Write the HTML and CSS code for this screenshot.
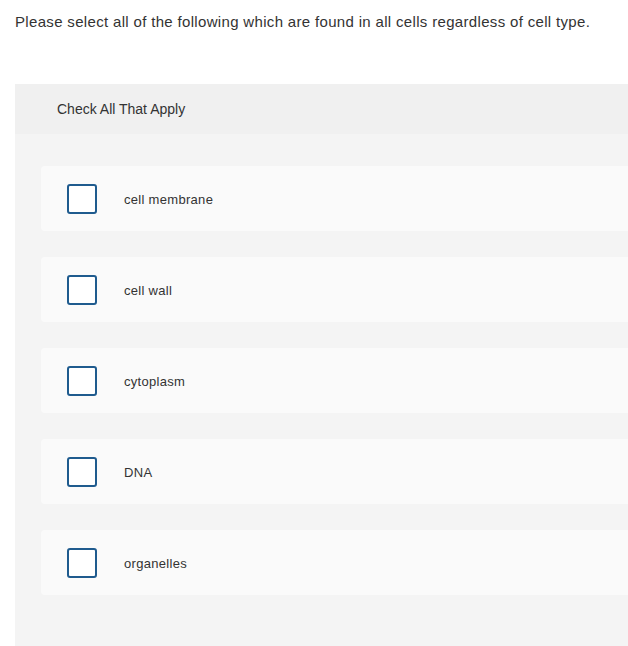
FILE: index.html
```html
<!DOCTYPE html>
<html lang="en">
<head>
    <meta charset="UTF-8">
    <title>Check All That Apply</title>
    <link rel="stylesheet" href="styles.css">
</head>
<body>
    <p class="prompt">Please select all of the following which are found in all cells regardless of cell type.</p>

    <div class="question">
        <div class="question-header">Check All That Apply</div>
        <div class="choices">
            <label class="choice"><input type="checkbox"><span class="box"></span><span class="choice-text">cell membrane</span></label>
            <label class="choice"><input type="checkbox"><span class="box"></span><span class="choice-text">cell wall</span></label>
            <label class="choice"><input type="checkbox"><span class="box"></span><span class="choice-text">cytoplasm</span></label>
            <label class="choice"><input type="checkbox"><span class="box"></span><span class="choice-text">DNA</span></label>
            <label class="choice"><input type="checkbox"><span class="box"></span><span class="choice-text">organelles</span></label>
        </div>
    </div>
</body>
</html>
```

FILE: styles.css
```css
body {
    margin: 0;
    padding: 0 0 0 15px;
    font-family: "Liberation Sans", Arial, sans-serif;
    color: #333;
    background-color: #ffffff;
    overflow: hidden;
}

.prompt {
    margin: 0;
    padding-top: 13px;
    font-size: 15px;
    line-height: 18px;
    letter-spacing: 0.33px;
    color: #333;
}

.question {
    margin-top: 53px;
    background-color: #f4f4f4;
    height: 562px;
}

.question-header {
    background-color: #f0f0f0;
    height: 50px;
    line-height: 51px;
    padding-left: 42px;
    font-size: 14px;
    color: #333;
}

.choices {
    display: flex;
    flex-direction: column;
    gap: 26px;
    padding: 32px 0 0 26px;
}

.choice {
    display: flex;
    align-items: center;
    height: 65px;
    background-color: #fafafa;
    border-radius: 4px 0 0 4px;
    padding-left: 26px;
    cursor: pointer;
}

.choice input {
    display: none;
}

.box {
    width: 26px;
    height: 26px;
    border: 2px solid #1f5b8e;
    border-radius: 3px;
    background-color: #ffffff;
    flex-shrink: 0;
}

.choice-text {
    margin-left: 27px;
    padding-top: 2px;
    font-size: 13px;
    letter-spacing: 0.3px;
    color: #333;
}
```
